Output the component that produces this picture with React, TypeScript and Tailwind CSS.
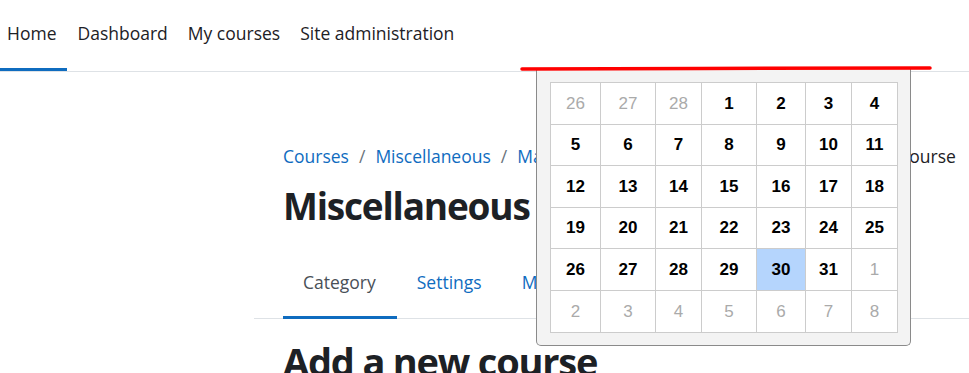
import React from "react";

const weeks: { d: number; muted?: boolean; sel?: boolean }[][] = [
  [{ d: 26, muted: true }, { d: 27, muted: true }, { d: 28, muted: true }, { d: 1 }, { d: 2 }, { d: 3 }, { d: 4 }],
  [{ d: 5 }, { d: 6 }, { d: 7 }, { d: 8 }, { d: 9 }, { d: 10 }, { d: 11 }],
  [{ d: 12 }, { d: 13 }, { d: 14 }, { d: 15 }, { d: 16 }, { d: 17 }, { d: 18 }],
  [{ d: 19 }, { d: 20 }, { d: 21 }, { d: 22 }, { d: 23 }, { d: 24 }, { d: 25 }],
  [{ d: 26 }, { d: 27 }, { d: 28 }, { d: 29 }, { d: 30, sel: true }, { d: 31 }, { d: 1, muted: true }],
  [{ d: 2, muted: true }, { d: 3, muted: true }, { d: 4, muted: true }, { d: 5, muted: true }, { d: 6, muted: true }, { d: 7, muted: true }, { d: 8, muted: true }],
];

const colW = ["w-[50px]", "w-[55px]", "w-[46px]", "w-[55px]", "w-[49px]", "w-[46px]", "w-[46px]"];

export default function App() {
  return (
    <div className="relative w-[969px] h-[373px] overflow-hidden bg-white text-[#1d2125]" style={{ fontFamily: '"Open Sans", "Noto Sans", sans-serif' }}>
      {/* navbar */}
      <nav className="flex h-[72px] border-b border-[#dee2e6] text-[17.5px]">
        <a className="flex items-center pb-[2px] pl-[7px] pr-[11px] border-b-[3px] border-[#0f6cbf]">Home</a>
        <a className="flex items-center pb-[2px] px-[10px] border-b-[3px] border-transparent">Dashboard</a>
        <a className="flex items-center pb-[2px] px-[10px] border-b-[3px] border-transparent">My courses</a>
        <a className="flex items-center pb-[2px] px-[10px] border-b-[3px] border-transparent">Site administration</a>
      </nav>

      {/* page content */}
      <div className="pl-[254px]">
        <div className="pl-[29px] pt-[73px] flex items-center gap-[10px] text-[17.5px] text-[#0f6cbf] h-[95px] whitespace-nowrap">
          <span>Courses</span>
          <span className="text-[#6a737b]">/</span>
          <span>Miscellaneous</span>
          <span className="text-[#6a737b]">/</span>
          <span>Manage courses and categories</span>
          <span className="text-[#6a737b]">/</span>
          <span className="ml-[10px] text-[#1d2125]">Add a new course</span>
        </div>
        <h1 className="pl-[29px] mt-[17px] text-[37px] font-bold leading-[44px] tracking-[-1.2px]">Miscellaneous</h1>
        <div className="mt-[30px] flex border-b border-[#dee2e6] text-[17.5px] leading-[24px] pl-[29px]">
          <div className="pt-[12px] pb-[22px] pl-[20px] pr-[21px] border-b-[3px] border-[#0f6cbf] mb-[-1px] text-[#495057]">Category</div>
          <div className="pt-[12px] pb-[22px] px-[20px] border-b-[3px] border-transparent mb-[-1px] text-[#0f6cbf]">Settings</div>
          <div className="pt-[12px] pb-[22px] px-[20px] border-b-[3px] border-transparent mb-[-1px] text-[#0f6cbf]">More</div>
        </div>
        <h2 className="pl-[29px] mt-[19px] text-[38px] font-bold leading-[46px] tracking-[-1.2px] whitespace-nowrap">Add a new course</h2>
      </div>

      {/* calendar popup */}
      <div className="absolute left-[536px] top-[69px] w-[375px] h-[277px] bg-[#f3f3f3] border border-t-0 border-[#8a8a8a] rounded-b-[5px] pl-[13px] pt-[13px]">
        <table className="border-collapse" style={{ fontFamily: '"Liberation Sans", Arial, sans-serif' }}>
          <tbody>
            {weeks.map((w, i) => (
              <tr key={i} className="h-[41.6px]">
                {w.map((c, j) => (
                  <td
                    key={j}
                    className={`${colW[j]} p-0 border border-[#cccccc] text-center text-[17px] ${
                      c.sel ? "bg-[#b5d5fd]" : "bg-white"
                    } ${c.muted ? "text-[#aaaaaa] font-normal" : "text-black font-bold"}`}
                  >
                    {c.d}
                  </td>
                ))}
              </tr>
            ))}
          </tbody>
        </table>
      </div>

      {/* red annotation line */}
      <svg className="absolute left-0 top-0" width="969" height="373" viewBox="0 0 969 373">
        <path d="M522 69 L700 68.5 L930 68" stroke="#ff0000" strokeWidth="3.5" strokeLinecap="round" fill="none" />
      </svg>
    </div>
  );
}
